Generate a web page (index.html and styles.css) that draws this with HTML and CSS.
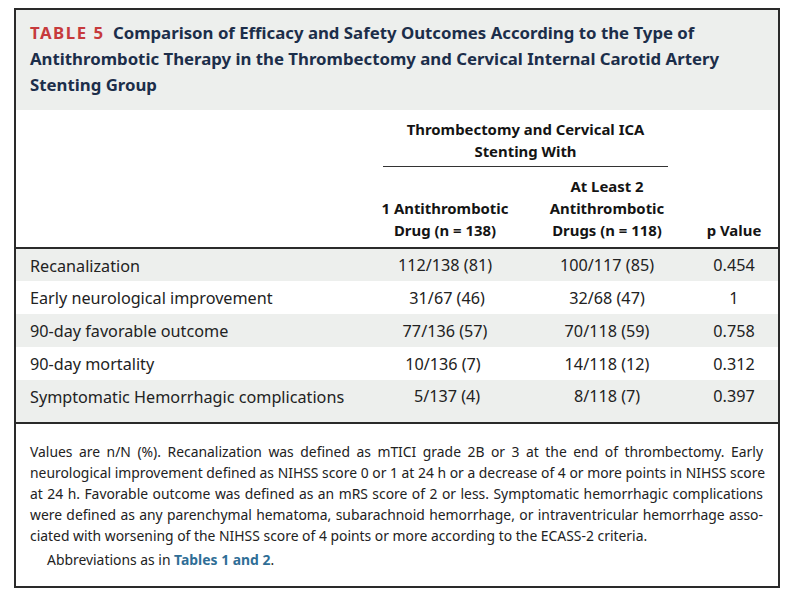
FILE: index.html
```html
<!DOCTYPE html>
<html>
<head>
<meta charset="utf-8">
<link rel="stylesheet" href="styles.css">
</head>
<body>
<div class="card">
  <div class="caption">
    <span class="label">TABLE 5</span> Comparison of Efficacy and Safety Outcomes According to the Type of<br>
    Antithrombotic Therapy in the Thrombectomy and Cervical Internal Carotid Artery<br>
    Stenting Group
  </div>
  <table class="data">
    <colgroup>
      <col class="c-label">
      <col class="c-one">
      <col class="c-two">
      <col class="c-p">
    </colgroup>
    <thead>
      <tr class="group-row">
        <th></th>
        <th colspan="2" class="group"><div class="group-inner">Thrombectomy and Cervical ICA<br>Stenting With</div></th>
        <th></th>
      </tr>
      <tr class="sub-row">
        <th></th>
        <th class="num">1 Antithrombotic<br>Drug (n = 138)</th>
        <th class="num">At Least 2<br>Antithrombotic<br>Drugs (n = 118)</th>
        <th class="num pcol">p Value</th>
      </tr>
    </thead>
    <tbody>
      <tr class="shade">
        <td class="lbl">Recanalization</td>
        <td class="num">112/138 (81)</td>
        <td class="num">100/117 (85)</td>
        <td class="num pcol">0.454</td>
      </tr>
      <tr>
        <td class="lbl">Early neurological improvement</td>
        <td class="num">&nbsp;31/67 (46)</td>
        <td class="num">32/68 (47)</td>
        <td class="num pcol">1</td>
      </tr>
      <tr class="shade">
        <td class="lbl">90-day favorable outcome</td>
        <td class="num">77/136 (57)</td>
        <td class="num">70/118 (59)</td>
        <td class="num pcol">0.758</td>
      </tr>
      <tr>
        <td class="lbl">90-day mortality</td>
        <td class="num">10/136 (7)&nbsp;</td>
        <td class="num">14/118 (12)</td>
        <td class="num pcol">0.312</td>
      </tr>
      <tr class="shade last">
        <td class="lbl">Symptomatic Hemorrhagic complications</td>
        <td class="num">&nbsp;5/137 (4)</td>
        <td class="num">8/118 (7)</td>
        <td class="num pcol">0.397</td>
      </tr>
    </tbody>
  </table>
  <div class="notes">
    <p class="note-main">
      <span class="line">Values are n/N (%). Recanalization was defined as mTICI grade 2B or 3 at the end of thrombectomy. Early</span>
      <span class="line">neurological improvement defined as NIHSS score 0 or 1 at 24 h or a decrease of 4 or more points in NIHSS score</span>
      <span class="line">at 24 h. Favorable outcome was defined as an mRS score of 2 or less. Symptomatic hemorrhagic complications</span>
      <span class="line">were defined as any parenchymal hematoma, subarachnoid hemorrhage, or intraventricular hemorrhage asso-</span>
      <span class="line final">ciated with worsening of the NIHSS score of 4 points or more according to the ECASS-2 criteria.</span>
    </p>
    <p class="note-abbr">Abbreviations as in <span class="ref">Tables 1 and 2</span>.</p>
  </div>
</div>
</body>
</html>
```

FILE: styles.css
```css
* { box-sizing: border-box; }

html, body {
  margin: 0;
  padding: 0;
  background: #ffffff;
}

body {
  padding: 8px 0 0 14px;
  font-family: "Noto Sans", "Open Sans", sans-serif;
  color: #222222;
}

.card {
  width: 766px;
  height: 580px;
  border: 2px solid #2a2a2a;
  background: #ffffff;
}

.caption {
  background: #edefed;
  height: 100px;
  padding: 10px 14px 0 14px;
  font-weight: 700;
  font-size: 16.8px;
  line-height: 26px;
  color: #1c2e4a;
  white-space: nowrap;
}

.label {
  color: #c63a3c;
  letter-spacing: 1.5px;
  margin-right: 4px;
}

.data {
  width: 762px;
  border-collapse: collapse;
  table-layout: fixed;
}

.c-label { width: 360px; }
.c-one { width: 138px; }
.c-two { width: 186px; }
.c-p { width: 78px; }

thead th {
  font-weight: 700;
  font-size: 14.9px;
  line-height: 22px;
  color: #141414;
  padding: 0;
}

.group-row th {
  padding-top: 8px;
  vertical-align: top;
}

.group-inner {
  margin: 0 32px 0 7px;
  padding-bottom: 4px;
  border-bottom: 1.5px solid #333333;
  text-align: center;
}

.sub-row th {
  padding-top: 8px;
  padding-bottom: 6px;
  vertical-align: bottom;
  border-bottom: 2px solid #2a2a2a;
}

.num {
  text-align: center;
}

.pcol {
  padding-right: 10px !important;
}

tbody td {
  height: 33px;
  font-size: 16.2px;
  line-height: 20px;
  padding: 0;
  color: #222222;
  vertical-align: middle;
}

tbody .lbl {
  padding-left: 14px;
  padding-top: 1px;
}

tr.shade td {
  background: #edefed;
}

tr.last td {
  height: 43px;
  padding-bottom: 10px;
  border-bottom: 2px solid #2a2a2a;
}

.notes {
  padding: 17px 15px 0 14px;
  font-size: 13.9px;
  line-height: 21px;
  color: #222222;
}

.note-main {
  margin: 0;
}

.line {
  display: block;
  text-align: justify;
  text-align-last: justify;
  white-space: nowrap;
}

.line.final {
  text-align-last: left;
}

.note-abbr {
  margin: 3px 0 0 17px;
}

.ref {
  color: #2f6e96;
  font-weight: 700;
}
```
